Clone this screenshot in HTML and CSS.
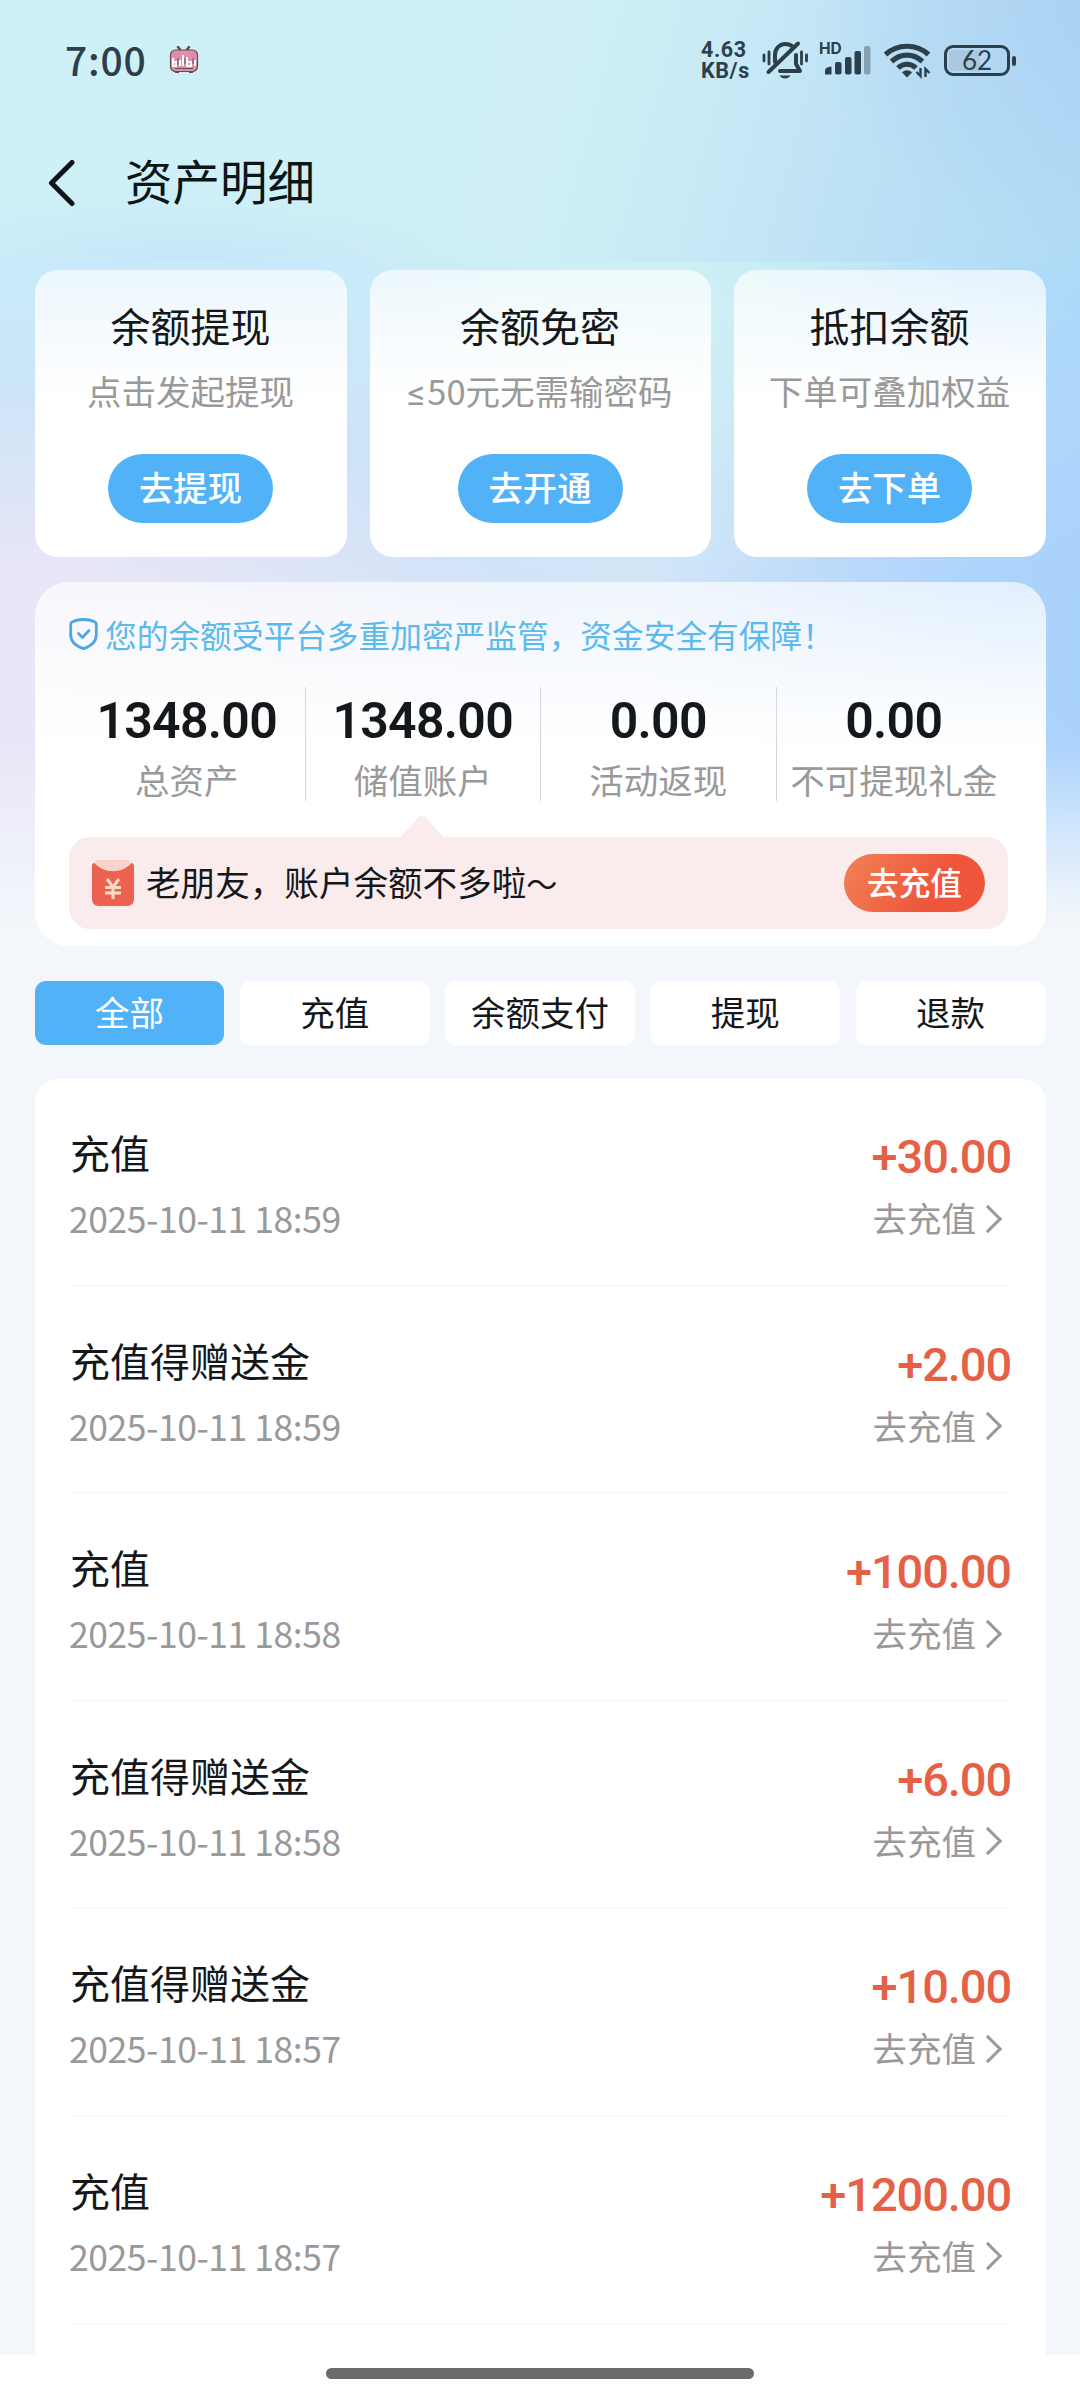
FILE: index.html
```html
<!DOCTYPE html>
<html lang="zh-CN">

<head>
    <meta charset="UTF-8">
    <meta name="viewport" content="width=device-width, initial-scale=1.0">
    <title>资产明细</title>
    <link rel="stylesheet" href="styles.css">
</head>

<body>
    <div class="page">
        <header class="header">
            <div class="status">
                <span class="time">7:00</span>
                <svg class="app-icon" width="30" height="28" viewBox="0 0 30 28">
                    <path d="M9 1l3 4M20 1l-3 4" stroke="#5a4650" stroke-width="2.4" stroke-linecap="round" />
                    <rect x="1.5" y="4" width="27" height="21.500" rx="5" fill="#dd8fa8" stroke="#6b4a58" stroke-width="1.2" />
                    <path d="M6 26h4M20 26h4" stroke="#6b4a58" stroke-width="2" />
                    <path d="M4 12v8h3v-4H4M11 14v6M14 9v11M18 11v9h4v-4h-4M26 14v6" fill="none" stroke="#fff" stroke-width="2" />
                    <path d="M9 12v7M16 12v6M24 12v6M6 22.500h18" fill="none" stroke="#6b4a58" stroke-width="1" />
                </svg>
                <div class="speed">
                    <span>4.63</span>
                    <span>KB/s</span>
                </div>
                <svg class="bell" width="46" height="40" viewBox="0 0 46 40" fill="none" stroke="#2d3f4a" stroke-width="4" stroke-linecap="round" stroke-linejoin="round">
                    <path d="M2 15v6M7 12v12M39.500 12v12M44.500 15v6" stroke-width="2.800" />
                    <path d="M13 22v-7c0-7 5-11 10.500-11 3 0 4.500 .6 6.500 2" />
                    <path d="M34 15v9l4 7H18" />
                    <path d="M36 3.500L6.500 32" />
                    <path d="M17.500 35.500c2 4 9 4 11 0z" fill="#2d3f4a" stroke="none" />
                </svg>
                <div class="signal">
                    <span class="hd">HD</span>
                    <svg width="46" height="30" viewBox="0 0 46 30" fill="#2d3f4a">
                        <path d="M0 28.500v-4q0-3.500 6.500-4v8z" />
                        <rect x="10" y="16" width="6.500" height="12.500" rx="2" />
                        <rect x="20" y="11" width="6.500" height="17.500" rx="2" />
                        <rect x="29.500" y="5" width="6.500" height="23.500" rx="2" />
                        <rect x="39" y="0" width="6.500" height="28.500" rx="2" fill="#85a2b4" />
                    </svg>
                </div>
                <svg class="wifi" width="48" height="38" viewBox="0 0 48 38" fill="none" stroke="#2d3f4a" stroke-width="5.200">
                    <path d="M2.500 13.500c12-11 31-11 43 0" />
                    <path d="M8.500 20.500c9-8.500 22-8.500 31 0" />
                    <path d="M15 27c5-5 13-5 18 0" />
                    <path d="M19 31.500c3-3 7-3 10 0l-5 5z" fill="#2d3f4a" stroke="none" />
                    <path d="M37.500 27v8l-4-4M42.500 36v-8l4 4" stroke-width="2.400" />
                </svg>
                <div class="battery">62</div>
            </div>
            <nav class="nav">
                <svg width="28" height="50" viewBox="0 0 28 50" fill="none" stroke="#0c1517" stroke-width="5" stroke-linecap="round" stroke-linejoin="round">
                    <path d="M24 4.500L3.500 25l20.500 20.500" />
                </svg>
                <h1>资产明细</h1>
            </nav>
        </header>

        <main class="main">
            <section class="cards">
                <div class="card">
                    <h2>余额提现</h2>
                    <p>点击发起提现</p>
                    <button>去提现</button>
                </div>
                <div class="card">
                    <h2>余额免密</h2>
                    <p><span class="lte">≤</span>50元无需输密码</p>
                    <button>去开通</button>
                </div>
                <div class="card">
                    <h2>抵扣余额</h2>
                    <p>下单可叠加权益</p>
                    <button>去下单</button>
                </div>
            </section>

            <section class="assets">
                <div class="notice">
                    <svg width="29" height="32" viewBox="0 0 29 32" fill="none" stroke="#4da7e4" stroke-width="2.800" stroke-linecap="round" stroke-linejoin="round">
                        <path d="M14.500 1.500c4 0 8 .8 11 2.300 1.300.6 1.800 1.400 1.800 2.700v10c0 7-5.300 11.800-12.800 14.200C7 28.300 1.700 23.500 1.700 16.500v-10c0-1.300.5-2.100 1.800-2.700 3-1.500 7-2.300 11-2.300z" />
                        <path d="M9.500 15.500l4 4 6.500-7" />
                    </svg>
                    <span>您的余额受平台多重加密严监管，资金安全有保障！</span>
                </div>
                <div class="stats">
                    <div class="stat">
                        <strong>1348.00</strong>
                        <span>总资产</span>
                    </div>
                    <div class="stat">
                        <strong>1348.00</strong>
                        <span>储值账户</span>
                    </div>
                    <div class="stat">
                        <strong>0.00</strong>
                        <span>活动返现</span>
                    </div>
                    <div class="stat">
                        <strong>0.00</strong>
                        <span>不可提现礼金</span>
                    </div>
                </div>
                <div class="tip">
                    <svg class="tip-arrow" width="44" height="23" viewBox="0 0 44 23">
                        <path d="M0 23L18.500 2.500q3.500-4 7 0L44 23z" fill="#faebec" />
                    </svg>
                    <svg width="42" height="46" viewBox="0 0 42 46">
                        <rect x="2" y="0" width="38" height="20" rx="5" fill="#f9d3cb" />
                        <path d="M0 6q0-3 2.500-3C12 14 30 14 39.500 3 42 3 42 6 42 6v33q0 7-7 7H7q-7 0-7-7z" fill="#eb6350" />
                        <path d="M15 19l6 8 6-8M21 27v12M13 27.500h16M13 33h16" fill="none" stroke="#fcdcc4" stroke-width="3" />
                    </svg>
                    <span class="tip-text">老朋友，账户余额不多啦<i>～</i></span>
                    <button>去充值</button>
                </div>
            </section>

            <div class="tabs">
                <a class="tab active">全部</a>
                <a class="tab">充值</a>
                <a class="tab">余额支付</a>
                <a class="tab">提现</a>
                <a class="tab">退款</a>
            </div>

            <ul class="list">
                <li>
                    <div>
                        <h3>充值</h3>
                        <time>2025-10-11 18:59</time>
                    </div>
                    <div class="right">
                        <b>+30.00</b>
                        <span class="go">去充值</span>
                    </div>
                </li>
                <li>
                    <div>
                        <h3>充值得赠送金</h3>
                        <time>2025-10-11 18:59</time>
                    </div>
                    <div class="right">
                        <b>+2.00</b>
                        <span class="go">去充值</span>
                    </div>
                </li>
                <li>
                    <div>
                        <h3>充值</h3>
                        <time>2025-10-11 18:58</time>
                    </div>
                    <div class="right">
                        <b>+100.00</b>
                        <span class="go">去充值</span>
                    </div>
                </li>
                <li>
                    <div>
                        <h3>充值得赠送金</h3>
                        <time>2025-10-11 18:58</time>
                    </div>
                    <div class="right">
                        <b>+6.00</b>
                        <span class="go">去充值</span>
                    </div>
                </li>
                <li>
                    <div>
                        <h3>充值得赠送金</h3>
                        <time>2025-10-11 18:57</time>
                    </div>
                    <div class="right">
                        <b>+10.00</b>
                        <span class="go">去充值</span>
                    </div>
                </li>
                <li>
                    <div>
                        <h3>充值</h3>
                        <time>2025-10-11 18:57</time>
                    </div>
                    <div class="right">
                        <b>+1200.00</b>
                        <span class="go">去充值</span>
                    </div>
                </li>
            </ul>
        </main>

        <footer class="home-bar">
            <i></i>
        </footer>
    </div>
</body>

</html>
```
FILE: styles.css
```css
* {
    margin: 0;
    padding: 0;
    box-sizing: border-box;
}

body {
    font-family: "Noto Sans CJK SC", sans-serif;
    color: #15181b;
    background: #f3f7fb;
}

h1,
h2,
h3 {
    font-weight: 400;
}

button {
    border: 0;
    font-family: inherit;
    font-weight: 500;
    color: #fff;
}

.page {
    width: 1080px;
    height: 2400px;
    display: flex;
    flex-direction: column;
    overflow: hidden;
    background:
        linear-gradient(180deg, rgba(243, 247, 251, 0) 740px, #f3f7fb 925px),
        radial-gradient(ellipse 480px 460px at 1130px 660px, #a9d2fb 0, rgba(169, 210, 251, 0.95) 30%, rgba(169, 210, 251, 0) 100%),
        radial-gradient(ellipse 560px 360px at 0 740px, #e9e6f7 0, #e8e6f7 45%, rgba(232, 230, 247, 0) 100%),
        radial-gradient(ellipse 330px 320px at 640px 320px, #cff1f3 0, rgba(207, 241, 243, 0) 100%),
        radial-gradient(ellipse 500px 400px at 1130px 300px, #acdaf8 0, rgba(172, 218, 248, 0) 100%),
        linear-gradient(180deg, #c8eafa 262px, #cde3f8 440px, #d3e2f8 600px);
}

/* header */
.header {
    height: 262px;
    flex: none;
    background:
        radial-gradient(ellipse 330px 80px at 190px 270px, #c6e4f8 0, rgba(198, 228, 248, 0) 100%),
        radial-gradient(ellipse 330px 260px at 1140px 0, #abd0f3 0, rgba(171, 208, 243, 0) 100%),
        linear-gradient(105deg, #cef0f8 0, #d0f0f6 50%, #c6e7f5 68%, #b8dff5 85%, #b0dbf5 100%);
}

.status {
    height: 120px;
    padding: 0 65px;
    display: flex;
    align-items: center;
    color: #2d3f4a;
}

.time {
    width: 104px;
    font-size: 39px;
    font-weight: 500;
    letter-spacing: 0.8px;
    line-height: 120px;
    margin-top: -3px;
}

.speed {
    margin-left: auto;
    width: 61px;
    display: flex;
    flex-direction: column;
    font: 700 21.5px/21px Roboto, sans-serif;
    letter-spacing: 0.6px;
}

.bell {
    margin-right: 12px;
}

.signal {
    position: relative;
    width: 63px;
    height: 30px;
    padding: 1px 0 0 5px;
}

.hd {
    position: absolute;
    left: -1px;
    top: -4px;
    font: 700 15.5px/16px Inter, sans-serif;
}

.wifi {
    margin-right: 13px;
}

.battery {
    position: relative;
    width: 66px;
    height: 31px;
    border: 3px solid #2d3f4a;
    border-radius: 9px;
    margin-right: 5px;
    padding: 2px;
    font: 400 26px/21px Lato, sans-serif;
    text-align: center;
    background: linear-gradient(90deg, #a9c9e0 55%, transparent 55%) content-box;
}

.battery::after {
    content: "";
    position: absolute;
    right: -9px;
    top: 8px;
    width: 4px;
    height: 10px;
    border-radius: 2px;
    background: #2d3f4a;
}

.nav {
    height: 126px;
    padding-left: 48px;
    display: flex;
    align-items: center;
    gap: 49px;
}

.nav h1 {
    font-size: 47.5px;
    line-height: 60px;
    color: #0c1517;
    margin-top: -6px;
}

/* entry cards */
.main {
    flex: 1;
    min-height: 0;
    padding: 7.5px 34.5px 0;
    overflow: hidden;
}

.cards {
    display: grid;
    grid-template-columns: 312px 341px 312px;
    gap: 23px;
}

.card {
    height: 287.5px;
    padding-top: 27px;
    border-radius: 23px;
    text-align: center;
    background: linear-gradient(180deg, rgba(255, 255, 255, 0.65), #fff 45%);
}

.card h2 {
    font-size: 40px;
    line-height: 56px;
}

.card p {
    height: 48px;
    margin-top: 13px;
    font-size: 34.5px;
    line-height: 48px;
    color: #999;
    white-space: nowrap;
}

.card .lte {
    margin-right: 2px;
    font-size: 35px;
    font-family: Roboto, sans-serif;
    line-height: 0;
}

.card button {
    margin-top: 40px;
    width: 165px;
    height: 69px;
    border-radius: 35px;
    font-size: 34.3px;
    line-height: 62px;
    padding-bottom: 5px;
    background: #52b2f8;
}

/* assets */
.assets {
    height: 364px;
    margin-top: 25px;
    padding: 32px 34.5px 0;
    border-radius: 34px;
    background: linear-gradient(180deg, rgba(255, 255, 255, 0.65), #fff 45%);
}

.notice {
    height: 40px;
    display: flex;
    align-items: center;
    gap: 7px;
    font-size: 31.7px;
    line-height: 38px;
    color: #5bbaed;
    white-space: nowrap;
}

.stats {
    margin-top: 33px;
    display: grid;
    grid-template-columns: repeat(4, 235.5px);
}

.stat {
    height: 114px;
    text-align: center;
    white-space: nowrap;
}

.stat + .stat {
    border-left: 1.5px solid #d6d8dc;
}

.stat strong {
    display: block;
    margin-top: 4px;
    font: 600 50px/60px Roboto, sans-serif;
    letter-spacing: -0.7px;
}

.stat span {
    display: block;
    margin-top: 4px;
    font-size: 34.5px;
    line-height: 48px;
    color: #999;
}

.tip {
    position: relative;
    width: 939px;
    height: 92px;
    margin-top: 36px;
    padding: 0 23px;
    display: flex;
    align-items: center;
    border-radius: 21px;
    background: #faebec;
}

.tip-arrow {
    position: absolute;
    left: 331px;
    top: -22.5px;
}

.tip-text {
    margin: -3px 0 0 12px;
    font-size: 34.6px;
    line-height: 48px;
}

.tip-text i {
    font-style: normal;
    font-size: 31px;
}

.tip button {
    margin-left: auto;
    width: 141px;
    height: 58px;
    border-radius: 29px;
    font-size: 31.7px;
    line-height: 52px;
    padding-bottom: 4px;
    background: linear-gradient(120deg, #f28155, #ee563c 65%);
}

/* tabs */
.tabs {
    margin-top: 35px;
    display: grid;
    grid-template-columns: repeat(5, 1fr);
    gap: 15.5px;
}

.tab {
    height: 64px;
    border-radius: 11px;
    background: #fff;
    font-size: 34.5px;
    line-height: 61px;
    text-align: center;
}

.tab.active {
    color: #fff;
    background: #52b2f8;
}

/* records */
.list {
    height: 1400px;
    margin-top: 34px;
    padding: 0 34.5px;
    border-radius: 24px;
    background: #fff;
    list-style: none;
}

.list li {
    height: 207.6px;
    padding-top: 46px;
    display: flex;
    justify-content: space-between;
    border-bottom: 2px solid #f8f9fa;
}

.list h3 {
    margin-left: 1px;
    font-size: 40px;
    line-height: 54px;
}

.list time {
    display: block;
    margin-top: 15px;
    font-size: 35.5px;
    line-height: 48px;
    letter-spacing: -0.45px;
    color: #999;
}

.right {
    display: flex;
    flex-direction: column;
    align-items: flex-end;
}

.right b {
    margin-top: 2px;
    font: 500 47px/60px Roboto, sans-serif;
    letter-spacing: -1.1px;
    color: #e65f47;
}

.go {
    display: flex;
    align-items: center;
    margin-top: 5px;
    padding-right: 13px;
    font-size: 34.5px;
    line-height: 50px;
    color: #999;
}

.go::after {
    content: "";
    width: 17px;
    height: 17px;
    margin: 3px 0 0 2px;
    border: solid #999;
    border-width: 3px 3px 0 0;
    transform: rotate(45deg);
}

.home-bar {
    height: 45px;
    flex: none;
    display: flex;
    justify-content: center;
    padding-top: 13px;
    background: #fff;
}

.home-bar i {
    width: 428px;
    height: 11px;
    border-radius: 6px;
    background: #6a6a6a;
}
```
